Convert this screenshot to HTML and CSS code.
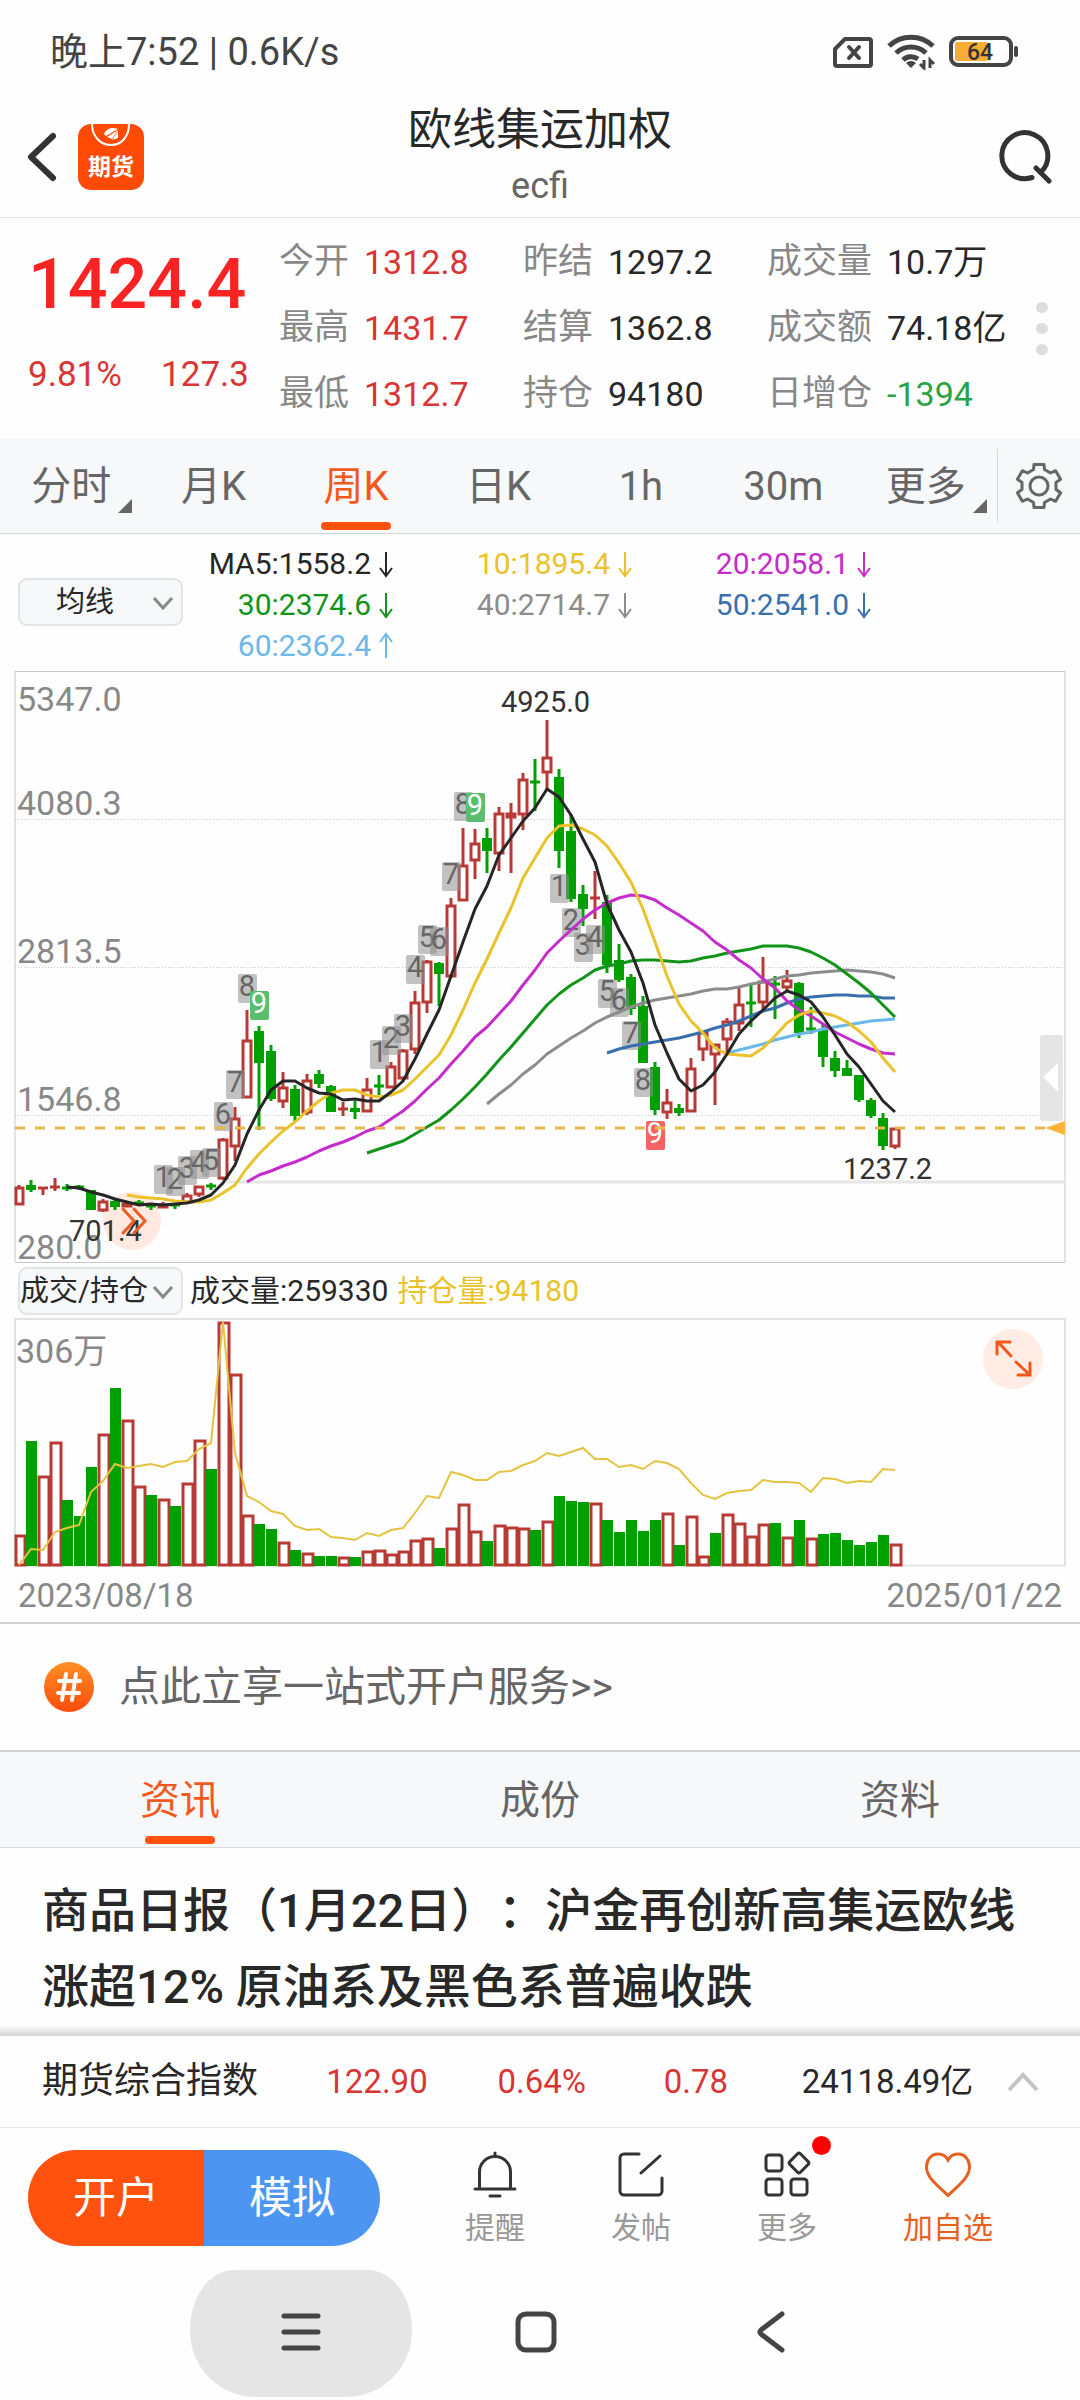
FILE: index.html
```html
<!DOCTYPE html>
<html lang="zh-CN">
<head>
<meta charset="utf-8">
<meta name="viewport" content="width=device-width, initial-scale=1">
<title>欧线集运加权</title>
<link rel="stylesheet" href="styles.css">
</head>
<body>
<div class="status">
  <span>晚上7:52 | 0.6K/s</span>
  <svg class="status-icons" width="186" height="36" viewBox="0 0 186 36" fill="none" stroke="#444" aria-hidden="true">
    <path d="M12 5H36a2 2 0 0 1 2 2V30a2 2 0 0 1-2 2H4a2 2 0 0 1-2-2V15z" stroke-width="4" stroke-linejoin="round"/>
    <path d="M16 13l10 11M26 13L16 24" stroke-width="4" stroke-linecap="round"/>
    <path d="M56 12a32 32 0 0 1 44 0M63 19a22 22 0 0 1 30 0M70 26a12 12 0 0 1 15-1" stroke-width="5"/>
    <path d="M73 29a7 7 0 0 1 10 0l-5 5z" fill="#444" stroke="none"/>
    <path d="M91 26v8l-4-4M97 34v-8l4 4" stroke-width="3"/>
    <rect x="122" y="8" width="33" height="19" rx="2" fill="#f8ae36" stroke="none"/>
    <rect x="118" y="4" width="60" height="27" rx="7" stroke-width="4"/>
    <path d="M183 14v7" stroke-width="4" stroke-linecap="round"/>
    <text class="battery-text" x="147" y="26" text-anchor="middle">64</text>
  </svg>
</div>

<header class="header">
  <div class="header-left">
    <button class="plain" aria-label="返回"><svg width="50" height="60" viewBox="0 0 50 60" fill="none" stroke="#333" stroke-width="6" stroke-linecap="round" stroke-linejoin="round"><path d="M33 9L11 30L33 51"/></svg></button>
    <svg width="66" height="66" viewBox="0 0 66 66" aria-hidden="true">
      <rect width="66" height="66" rx="13" fill="#ff4a05"/>
      <path d="M14 0C14 12 22 21 33 21S51 12 51 0" fill="none" stroke="#fff" stroke-width="2"/>
      <path d="M26 10C29 4 34 3 40 5L28 12zM29 13l11-7-6 9zM34 16l6-9v7z" fill="#fff"/>
      <text class="app-text" x="33" y="51" text-anchor="middle">期货</text>
    </svg>
  </div>
  <div class="header-title"><h1>欧线集运加权</h1><p>ecfi</p></div>
  <div class="header-right">
    <button class="plain" aria-label="搜索"><svg width="56" height="60" viewBox="0 0 56 60" fill="none" stroke="#333" stroke-width="5" stroke-linecap="round"><path d="M33 50.500A23 23 0 1 1 42 45M37 41L50 54"/></svg></button>
  </div>
</header>

<section class="quote">
  <div class="last">
    <strong>1424.4</strong>
    <div class="change"><span>9.81%</span><span>127.3</span></div>
  </div>
  <dl class="figures">
    <div><dt>今开</dt><dd class="up">1312.8</dd></div>
    <div><dt>昨结</dt><dd>1297.2</dd></div>
    <div><dt>成交量</dt><dd>10.7万</dd></div>
    <div><dt>最高</dt><dd class="up">1431.7</dd></div>
    <div><dt>结算</dt><dd>1362.8</dd></div>
    <div><dt>成交额</dt><dd>74.18亿</dd></div>
    <div><dt>最低</dt><dd class="up">1312.7</dd></div>
    <div><dt>持仓</dt><dd>94180</dd></div>
    <div><dt>日增仓</dt><dd class="down">-1394</dd></div>
  </dl>
  <button class="plain dots" aria-label="更多行情"><i></i><i></i><i></i></button>
</section>

<nav class="periods">
  <button class="tab has-more">分时</button>
  <button class="tab">月K</button>
  <button class="tab active">周K</button>
  <button class="tab">日K</button>
  <button class="tab">1h</button>
  <button class="tab">30m</button>
  <button class="tab has-more">更多</button>
  <button class="gear" aria-label="设置"><svg width="50" height="50" viewBox="-25 -25 50 50" fill="none" stroke="#666" stroke-width="3" stroke-linejoin="round"><path d="M-5.500-16.500L-5-21.500H5L5.500-16.500L11.500-13L16.600-15.300L21.600-6.700L17-3.500V3.500L21.600 6.700L16.600 15.300L11.500 13L5.500 16.500L5 21.500H-5L-5.500 16.500L-11.500 13L-16.600 15.300L-21.600 6.700L-17 3.500V-3.500L-21.600-6.700L-16.600-15.300L-11.500-13z"/><circle r="9"/></svg></button>
</nav>

<section class="averages">
  <div class="picker">
    <select class="picker-indent" aria-label="主图指标"><option>均线</option></select>
    <svg width="22" height="14" viewBox="0 0 22 14" aria-hidden="true"><path d="M2 2l9 10 9-10"/></svg>
  </div>
  <ul class="legend">
    <li class="ma5">MA5:1558.2<svg viewBox="0 0 16 28"><path d="M8 2v24M2 18l6 8 6-8"/></svg></li>
    <li class="ma10">10:1895.4<svg viewBox="0 0 16 28"><path d="M8 2v24M2 18l6 8 6-8"/></svg></li>
    <li class="ma20">20:2058.1<svg viewBox="0 0 16 28"><path d="M8 2v24M2 18l6 8 6-8"/></svg></li>
    <li class="ma30">30:2374.6<svg viewBox="0 0 16 28"><path d="M8 2v24M2 18l6 8 6-8"/></svg></li>
    <li class="ma40">40:2714.7<svg viewBox="0 0 16 28"><path d="M8 2v24M2 18l6 8 6-8"/></svg></li>
    <li class="ma50">50:2541.0<svg viewBox="0 0 16 28"><path d="M8 2v24M2 18l6 8 6-8"/></svg></li>
    <li class="ma60">60:2362.4<svg viewBox="0 0 16 28"><path d="M8 26V2M2 10l6-8 6 8"/></svg></li>
  </ul>
</section>

<svg class="chart" viewBox="0 0 1080 592" role="img" aria-label="周K线图">
  <path class="frame" d="M15 .5H1065V591.500H15z"/>
  <path class="grid-line" d="M15 148.500H1065M15 296.500H1065M15 444.500H1065"/>
  <path d="M226 511H1065" stroke="#e6e6e6" stroke-width="3"/>
  <g class="axis-text">
    <text x="17" y="40">5347.0</text><text x="17" y="144">4080.3</text>
    <text x="17" y="292">2813.5</text><text x="17" y="440">1546.8</text><text x="17" y="588">280.0</text>
  </g>
  <circle cx="132" cy="550" r="29" fill="#ffe9e1"/>
  <g id="candles"></g>
  <g id="badges"></g>
  <g id="averages"></g>
  <path d="M15 457H1046" stroke="#e8b64e" stroke-width="3" stroke-dasharray="10 10"/>
  <path d="M1045 457L1065 450V464z" fill="#fcb43a"/>
  <rect x="1040" y="364" width="23" height="86" rx="3" fill="#e5e5e5"/>
  <path d="M1043 406L1058 392V421z" fill="#fff"/>
  <g class="mark-text">
    <text x="501" y="41">4925.0</text><text x="69" y="570">701.4</text><text x="843" y="508">1237.2</text>
  </g>
  <path d="M123 538l11 12-11 12M134 538l11 12-11 12" fill="none" stroke="#f25c20" stroke-width="3" stroke-linecap="round"/>
</svg>

<section class="volume-head">
  <div class="picker">
    <select aria-label="副图指标"><option>成交/持仓</option></select>
    <svg width="22" height="14" viewBox="0 0 22 14" aria-hidden="true"><path d="M2 2l9 10 9-10"/></svg>
  </div>
  <span>成交量:259330</span>
  <span class="ma10">持仓量:94180</span>
</section>

<svg class="chart" viewBox="0 0 1080 249" role="img" aria-label="成交量与持仓量">
  <path d="M15 1H1065V247.500H15z" fill="none" stroke="#e2e2e2" stroke-width="2"/>
  <text class="axis-text" x="16" y="45">306万</text>
  <g id="volumes"></g>
  <g id="interest"></g>
  <circle cx="1013" cy="41" r="30" fill="#ffece4"/>
  <path d="M1011 38L998 24M997 36V24H1010M1016 44L1030 57M1030 45V57H1018" fill="none" stroke="#f4571c" stroke-width="3" stroke-linecap="round"/>
</svg>

<div class="dates"><time datetime="2023-08-18">2023/08/18</time><time datetime="2025-01-22">2025/01/22</time></div>

<a class="promo" href="#open">
  <svg width="50" height="50" viewBox="0 0 50 50" aria-hidden="true">
    <defs><linearGradient id="coin" x1="0" y1="0" x2="0" y2="1"><stop offset="0" stop-color="#ff8f25"/><stop offset="1" stop-color="#fd4c0c"/></linearGradient></defs>
    <circle cx="25" cy="25" r="25" fill="url(#coin)"/>
    <path d="M22 12L18 38M32 12L28 38M15 19H36M14 31H35" stroke="#fff" stroke-width="4" stroke-linecap="round"/>
  </svg>
  <span>点此立享一站式开户服务&gt;&gt;</span>
</a>

<nav class="sections">
  <button class="tab active">资讯</button>
  <button class="tab">成份</button>
  <button class="tab">资料</button>
</nav>

<main class="news"><h2>商品日报（1月22日）：沪金再创新高集运欧线涨超12% 原油系及黑色系普遍收跌</h2></main>

<section class="ticker">
  <span>期货综合指数</span>
  <b class="up">122.90</b>
  <b class="up">0.64%</b>
  <b class="up">0.78</b>
  <b>24118.49亿</b>
  <button class="plain" aria-label="展开"><svg width="34" height="24" viewBox="0 0 34 24" fill="none" stroke="#c4c4c4" stroke-width="4"><path d="M3 20L17 5L31 20"/></svg></button>
</section>

<footer class="actions">
  <div class="pair"><button class="open">开户</button><button class="demo">模拟</button></div>
  <div class="tools">
    <button class="tool"><svg viewBox="0 0 48 48"><path d="M8.500 39V22a15.500 15.500 0 0 1 31 0V39M4 39H44M24 3v3M19 46H29"/></svg>提醒</button>
    <button class="tool"><svg viewBox="0 0 48 48"><path d="M22 4H7a4 4 0 0 0-4 4V41a4 4 0 0 0 4 4H41a4 4 0 0 0 4-4V28M24 23L43 6"/></svg>发帖</button>
    <button class="tool"><svg viewBox="0 0 48 48"><rect x="3" y="5" width="16" height="16" rx="3"/><rect x="3" y="29" width="16" height="16" rx="3"/><rect x="28" y="29" width="16" height="16" rx="3"/><rect x="28.500" y="5.500" width="15" height="15" rx="2" transform="rotate(45 36 13)"/></svg><i class="dot"></i>更多</button>
    <button class="tool favorite"><svg viewBox="0 0 48 48"><path d="M24 10C22 6 18 4 14 4 7 4 2.500 10 2.500 17c0 11 12 19 21.500 28.500C33.500 36 45.500 28 45.500 17c0-7-4.500-13-11.500-13-4 0-8 2-10 6z"/></svg>加自选</button>
  </div>
</footer>

<nav class="system">
  <button class="pressed" aria-label="最近任务"><svg width="40" height="40" viewBox="0 0 40 40"><path d="M3 4H37M3 20H37M3 36H37"/></svg></button>
  <button aria-label="主屏幕"><svg width="44" height="44" viewBox="0 0 44 44"><rect x="4" y="4" width="36" height="36" rx="8"/></svg></button>
  <button aria-label="返回"><svg width="44" height="44" viewBox="0 0 44 44"><path d="M33 4L12 20q-2 2 0 4L33 40"/></svg></button>
</nav>
<script src="chart.js"></script>
</body>
</html>
```
FILE: styles.css
```css
* { box-sizing: border-box; }
body {
  margin: 0;
  background: #fefefe;
  color: #282828;
  font-family: Roboto, "Noto Sans CJK SC", sans-serif;
}
h1, h2, p, dl, dd, ul { margin: 0; padding: 0; }
button, select {
  margin: 0;
  padding: 0;
  border: 0;
  background: none;
  color: inherit;
  font-family: inherit;
}
svg { display: block; }
.plain { display: block; }
.up { color: #d93535; }
.down { color: #2ba245; }

.status {
  display: flex;
  justify-content: space-between;
  align-items: center;
  padding: 30px 61px 28px 50px;
  color: #444;
  font-size: 38px;
  line-height: 44px;
}
.battery-text { font-size: 23px; font-weight: 500; fill: #333; stroke: none; }

.header {
  display: grid;
  grid-template-columns: 1fr auto 1fr;
  padding: 1px 20px 7px;
  border-bottom: 1px solid #e6e6e6;
}
.header-left { display: flex; align-items: center; gap: 8px; }
.header-right { display: flex; justify-content: flex-end; align-items: center; padding-right: 5px; }
.header-title { text-align: center; }
.header-title h1 { margin-bottom: 5px; font-size: 44px; font-weight: 400; line-height: 54px; }
.header-title p { color: #666; font-size: 36px; line-height: 48px; }
.app-text { font-size: 23px; font-weight: 700; fill: #fff; }

.quote { display: flex; padding: 11px 32px 11px 28px; }
.last { width: 251px; padding-top: 15px; }
.last strong {
  display: block;
  margin-bottom: 29px;
  color: #fa2323;
  font-size: 70px;
  font-weight: 500;
  line-height: 80px;
}
.change {
  display: flex;
  justify-content: space-between;
  padding-right: 30px;
  color: #d93535;
  font-size: 35px;
  line-height: 44px;
}
.figures { flex: 1; display: grid; grid-template-columns: 244px 244px 1fr; }
.figures div { display: flex; gap: 15px; font-size: 35px; line-height: 66px; white-space: nowrap; }
.figures dt { color: #888; }
.figures dd { font-size: 34px; }
.dots { display: flex; flex-direction: column; justify-content: center; gap: 10px; }
.dots i { width: 12px; height: 11px; border-radius: 50%; background: #ddd; }

.periods { display: flex; border-bottom: 1px solid #d4d6da; background: #f7f8fa; }
.tab { position: relative; flex: 1; padding-top: 2px; color: #666; font-size: 40px; line-height: 93px; }
.tab.active { color: #f25a1d; }
.tab.active::after {
  content: "";
  position: absolute;
  bottom: 3px;
  left: 50%;
  width: 70px;
  height: 8px;
  margin-left: -35px;
  border-radius: 4px;
  background: #ff520f;
}
.has-more::after {
  content: "";
  position: absolute;
  right: 10px;
  bottom: 20px;
  border-bottom: 14px solid #666;
  border-left: 14px solid transparent;
}
.gear { display: flex; align-items: center; width: 83px; margin: 11px 0; padding-left: 16px; border-left: 1px solid #d4d6da; }

.averages { display: flex; align-items: center; padding: 9px 18px 5px; }
.averages .picker { margin-bottom: 5px; }
.picker { position: relative; width: 165px; }
.picker select {
  display: block;
  width: 100%;
  height: 48px;
  padding: 0;
  border: 2px solid #e2e4e8;
  border-radius: 9px;
  background: #f7f8fa;
  appearance: none;
  font-size: 29px;
}
.picker .picker-indent { padding-left: 36px; }
.picker svg { position: absolute; top: 18px; right: 9px; fill: none; stroke: #888; stroke-width: 3; pointer-events: none; }
.legend {
  display: grid;
  grid-template-columns: 211px repeat(2, 239px);
  list-style: none;
  font-size: 30px;
  line-height: 41px;
}
.legend li { display: flex; justify-content: flex-end; align-items: center; gap: 7px; }
.legend svg { width: 16px; height: 28px; fill: none; stroke: currentColor; stroke-width: 2; }
.ma5 { color: #262626; stroke: #262626; }
.ma10 { color: #eac22b; stroke: #eac22b; }
.ma20 { color: #c42dcc; stroke: #c42dcc; }
.ma30 { color: #12941a; stroke: #12941a; }
.ma40 { color: #8c8c8c; stroke: #8c8c8c; }
.ma50 { color: #3a6fae; stroke: #3a6fae; }
.ma60 { color: #6cb8e9; stroke: #6cb8e9; }

.chart { width: 100%; height: auto; }
.frame { fill: none; stroke: #c8c8c8; stroke-width: 1; }
.grid-line { stroke: #c8c8c8; stroke-width: 1; stroke-dasharray: 1 2; }
.axis-text { font-size: 34px; fill: #888; }
.mark-text { font-size: 29px; fill: #333; }
.curve { fill: none; stroke-width: 3; stroke-linejoin: round; }
.interest { fill: none; stroke: #e5c341; stroke-width: 2; }
.rise { fill: none; stroke: #b83a36; stroke-width: 3; }
.rise-box { fill: #fefefe; stroke: #b83a36; stroke-width: 3; }
.fall { fill: #00a000; stroke: #00a000; stroke-width: 3; }
.fall-box { fill: #00a000; }
.badge { fill: #8f8f8f; fill-opacity: .55; }
.badge-green { fill: #5cbd6c; }
.badge-red { fill: #f76262; }
.badge-text { font-size: 29px; fill: #666; text-anchor: middle; }
.badge-text.nine { fill: #fff; }

.volume-head { display: flex; align-items: center; gap: 9px; padding: 4px 18px 3px; font-size: 30px; line-height: 48px; }
.volume-head .picker { margin-right: -2px; }
.volume-head span { white-space: nowrap; }

.dates {
  display: flex;
  justify-content: space-between;
  padding: 2px 18px 0;
  border-bottom: 2px solid #d0d0d0;
  color: #888;
  font-size: 33px;
  line-height: 53px;
}
.promo {
  display: flex;
  align-items: center;
  gap: 25px;
  padding: 0 44px;
  border-bottom: 2px solid #d0d0d0;
  color: #666;
  font-size: 41px;
  line-height: 126px;
  text-decoration: none;
}
.sections { display: flex; border-bottom: 1px solid #dcdcdc; background: #f7f8fa; }
.news { padding: 25px 42px 0; }
.news h2 { font-size: 47px; font-weight: 500; line-height: 76px; text-spacing-trim: space-all; }

.ticker {
  position: relative;
  display: grid;
  grid-template-columns: 284fr 171fr 166fr 138fr 204fr auto;
  align-items: center;
  margin-top: 11px;
  padding: 0 40px 0 42px;
  border-bottom: 1px solid #e6e6e6;
  font-size: 36px;
  line-height: 91px;
}
.ticker::before {
  content: "";
  position: absolute;
  right: 0;
  bottom: 100%;
  left: 0;
  height: 11px;
  background: linear-gradient(#fefefe, #d4d4d4);
}
.ticker b { font-size: 33px; font-weight: 400; }

.actions { display: flex; padding: 22px 44px 24px 28px; }
.pair { display: flex; width: 352px; margin-right: 42px; overflow: hidden; border-radius: 48px; }
.pair button { flex: 1; color: #fff; font-size: 43px; line-height: 96px; }
.open { background: #ff520f; }
.demo { background: #4c96f2; }
.tools { flex: 1; display: grid; grid-template-columns: 1fr 1fr 1fr 176px; }
.tool {
  position: relative;
  display: flex;
  flex-direction: column;
  align-items: center;
  gap: 12px;
  color: #999;
  font-size: 30px;
  line-height: 36px;
}
.tool svg { width: 48px; height: 48px; fill: none; stroke: #333; stroke-width: 3; stroke-linecap: round; }
.tool.favorite { color: #e8601f; }
.favorite svg { stroke: #e8601f; }
.dot {
  position: absolute;
  top: -14px;
  left: 50%;
  width: 19px;
  height: 19px;
  margin-left: 25px;
  border-radius: 50%;
  background: #f00;
}

.system { display: grid; grid-template-columns: repeat(3, 222px); justify-content: center; gap: 13px; padding: 0 8px 4px 0; }
.system button { display: flex; justify-content: center; align-items: center; height: 127px; padding-bottom: 3px; }
.system svg { fill: none; stroke: #444; stroke-width: 5; stroke-linecap: round; }
.system .pressed { border-radius: 44px 44px 66px 66px / 60px 60px 66px 66px; background: #e5e5e5; }
```
FILE: chart.js
```js
// Each candle: body top, body bottom, high, low, kind.
// Levels run down from 5347.0 at 29 to 280.0 at 1523.
// r = hollow rising, g = filled falling, R = flat rising.
const candles = [
  [1332,1376,1328,1376,'r'],[1328,1338,1314,1345,'g'],[1333,1338,1333,1352,'R'],[1330,1335,1310,1342,'R'],
  [1332,1335,1326,1343,'g'],[1331,1336,1328,1340,'g'],[1340,1388,1340,1392,'g'],[1368,1392,1363,1395,'r'],
  [1368,1382,1360,1390,'g'],[1374,1382,1372,1384,'R'],[1371,1374,1366,1380,'g'],[1378,1382,1374,1390,'g'],
  [1376,1383,1370,1385,'R'],[1377,1380,1374,1388,'g'],[1354,1370,1348,1372,'r'],[1331,1350,1331,1358,'r'],
  [1328,1331,1322,1340,'g'],[1212,1310,1208,1314,'r'],[1158,1229,1130,1268,'r'],[962,1105,885,1108,'r'],
  [938,1017,926,1188,'g'],[989,1107,974,1115,'g'],[1080,1116,1042,1132,'r'],[1085,1151,1076,1166,'g'],
  [1063,1144,1048,1150,'r'],[1047,1069,1036,1083,'g'],[1077,1140,1074,1141,'g'],[1132,1138,1118,1152,'R'],
  [1134,1140,1116,1161,'g'],[1084,1141,1056,1144,'r'],[1076,1079,1050,1100,'g'],[1026,1080,1016,1082,'r'],
  [987,1058,984,1064,'r'],[864,984,838,997,'r'],[762,864,758,894,'r'],[766,792,764,874,'g'],
  [620,800,603,804,'r'],[518,606,425,610,'r'],[462,506,428,555,'r'],[450,481,425,538,'g'],
  [386,489,373,534,'r'],[387,397,362,538,'r'],[300,390,287,430,'r'],[307,310,250,382,'g'],
  [246,284,152,325,'r'],[296,481,276,526,'g'],[432,602,393,612,'g'],[592,626,569,672,'g'],
  [600,605,534,655,'R'],[612,768,594,791,'g'],[759,807,718,814,'g'],[801,879,794,897,'g'],
  [876,1016,850,1018,'g'],[1029,1136,1017,1151,'g'],[1117,1144,1085,1161,'r'],[1134,1142,1123,1152,'g'],
  [1031,1140,1007,1142,'r'],[941,984,938,1014,'r'],[971,996,971,1125,'r'],[913,958,905,996,'r'],
  [870,918,828,938,'r'],[865,867,820,928,'g'],[811,864,751,884,'r'],[817,820,799,908,'g'],
  [810,828,784,836,'r'],[818,942,814,956,'g'],[931,933,878,946,'g'],[936,1001,920,1029,'g'],
  [1007,1037,989,1055,'g'],[1032,1050,1012,1052,'g'],[1049,1110,1049,1118,'g'],[1113,1151,1107,1158,'g'],
  [1158,1226,1146,1239,'g'],[1184,1228,1184,1237,'r']
];

// Moving averages: class name, index of the first candle, levels.
const averages = [
  ['ma60', 59, [993,986,979,970,962,954,946,940,934,928,922,917,914,911,907]],
  ['ma50', 49, [993,983,975,970,965,960,957,948,940,930,922,912,901,888,879,867,858,852,849,847,847,849,849,854,854]],
  ['ma40', 39, [1124,1098,1074,1048,1024,997,976,956,938,918,902,889,878,867,861,856,851,845,837,832,832,826,820,814,806,800,796,792,789,787,784,786,789,795,804]],
  ['ma30', 29, [1246,1237,1227,1217,1200,1182,1163,1138,1110,1080,1047,1012,978,944,909,872,845,823,803,784,775,768,761,758,758,761,763,761,754,749,741,735,730,723,723,723,728,738,754,772,793,817,842,872,902]],
  ['ma20', 19, [1319,1303,1292,1280,1270,1256,1241,1230,1218,1206,1192,1180,1160,1140,1115,1085,1057,1022,988,953,928,896,862,822,785,741,710,682,656,631,614,602,595,596,608,627,645,665,685,713,733,758,780,806,830,862,885,900,921,940,957,971,984,993,996]],
  ['ma10', 9, [1353,1357,1360,1363,1367,1371,1371,1366,1348,1328,1284,1250,1220,1192,1168,1140,1115,1095,1088,1088,1099,1105,1099,1087,1060,1030,1000,948,886,818,756,690,627,552,500,450,420,417,427,443,470,513,562,630,712,800,870,914,944,980,996,1000,1001,982,950,917,897,887,894,900,915,938,966,1006,1043]],
  ['ma5', 4, [1334,1336,1345,1353,1363,1371,1378,1377,1378,1376,1373,1365,1353,1322,1277,1200,1138,1088,1064,1064,1083,1095,1098,1112,1110,1115,1115,1092,1064,1008,945,885,800,712,630,572,492,450,406,374,326,346,392,452,512,616,682,738,818,922,993,1059,1089,1074,1042,996,946,912,884,856,837,848,864,904,948,996,1030,1072,1115,1142]]
];

// Sequential count marks: first candle, tops of marks 1, 2, 3...
const counts = [
  { start: 12, tops: [1276,1281,1255,1238,1233,1119,1038,795,836], nine: 'badge-green' },
  { start: 30, tops: [960,925,896,747,669,674,512,335,337], nine: 'badge-green' },
  { start: 45, tops: [541,628,690,671,808,830,914,1033,1167], nine: 'badge-red' }
];

// Volume bar tops and open-interest levels, both with the base at 915.
const volumes = 'r824 g543 r647 r545 g720 g768 g621 r521 g384 r479 r677 g705 r716 g738 r668 r539 g627 r185 r341 r764 g792 g807 r845 g870 r878 g888 g888 r890 g891 r872 r869 r881 r872 r839 r833 g864 r803 r731 r812 g843 r794 r800 r803 g810 r782 g708 g723 g726 r728 g780 g816 g780 g813 g780 r758 g855 r767 r887 g819 r761 r788 r827 r791 g789 r830 g780 r833 g822 g819 g840 g855 g846 g825 r851'.split(' ');
const interest = [915,867,870,815,804,795,695,662,612,624,617,612,620,605,603,567,550,187,580,708,727,752,762,798,810,807,830,833,839,819,827,810,804,759,708,713,635,645,660,660,635,633,615,603,579,588,575,564,597,597,620,615,627,603,609,627,668,705,716,698,692,690,660,666,666,668,696,654,657,668,662,665,627,630];

const xOf = i => 19 + i * 12;
const priceY = v => Math.round(v / 2.529 - 11);
const volumeY = v => Math.round(v / 3 - 58);

function add(parent, tag, attrs, text) {
  const el = document.createElementNS('http://www.w3.org/2000/svg', tag);
  for (const key in attrs) el.setAttribute(key, attrs[key]);
  if (text) el.textContent = text;
  document.getElementById(parent).appendChild(el);
}
const points = (levels, start, y) => levels.map((v, i) => xOf(start + i) + ',' + y(v)).join(' ');

candles.forEach(([top, bottom, high, low, kind], i) => {
  const x = xOf(i), t = priceY(top), b = priceY(bottom);
  const left = Math.max(x - 4, 16), stroke = kind === 'g' ? 'fall' : 'rise';
  add('candles', 'path', { class: stroke, d: `M${x} ${priceY(high)}V${priceY(low)}` });
  if (b - t < 3) add('candles', 'path', { class: stroke, d: `M${left - 1} ${t + 1}H${x + 5}` });
  else if (kind === 'g') add('candles', 'rect', { class: 'fall-box', x: x - 5, y: t, width: 10, height: b - t + 1 });
  else add('candles', 'rect', { class: 'rise-box', x: left, y: t + 1, width: x + 4 - left, height: b - t - 1 });
});

counts.forEach(({ start, tops, nine }) => tops.forEach((top, i) => {
  const x = xOf(start + i), y = priceY(top), last = i === 8;
  add('badges', 'rect', { class: last ? nine : 'badge', x: x - 9, y, width: 19, height: 29, rx: 2 });
  add('badges', 'text', { class: last ? 'badge-text nine' : 'badge-text', x, y: y + 22 }, String(i + 1));
}));

averages.forEach(([name, start, levels]) =>
  add('averages', 'polyline', { class: 'curve ' + name, points: points(levels, start, priceY) }));

volumes.forEach((bar, i) => {
  const x = xOf(i), y = volumeY(+bar.slice(1));
  const left = Math.max(x - 4, 16);
  if (bar[0] === 'g') add('volumes', 'rect', { class: 'fall-box', x: x - 5, y, width: 11, height: 248 - y });
  else add('volumes', 'rect', { class: 'rise-box', x: left, y: y + 1, width: x + 6 - left, height: 246 - y });
});
add('interest', 'polyline', { class: 'interest', points: points(interest, 0, volumeY) });
```
